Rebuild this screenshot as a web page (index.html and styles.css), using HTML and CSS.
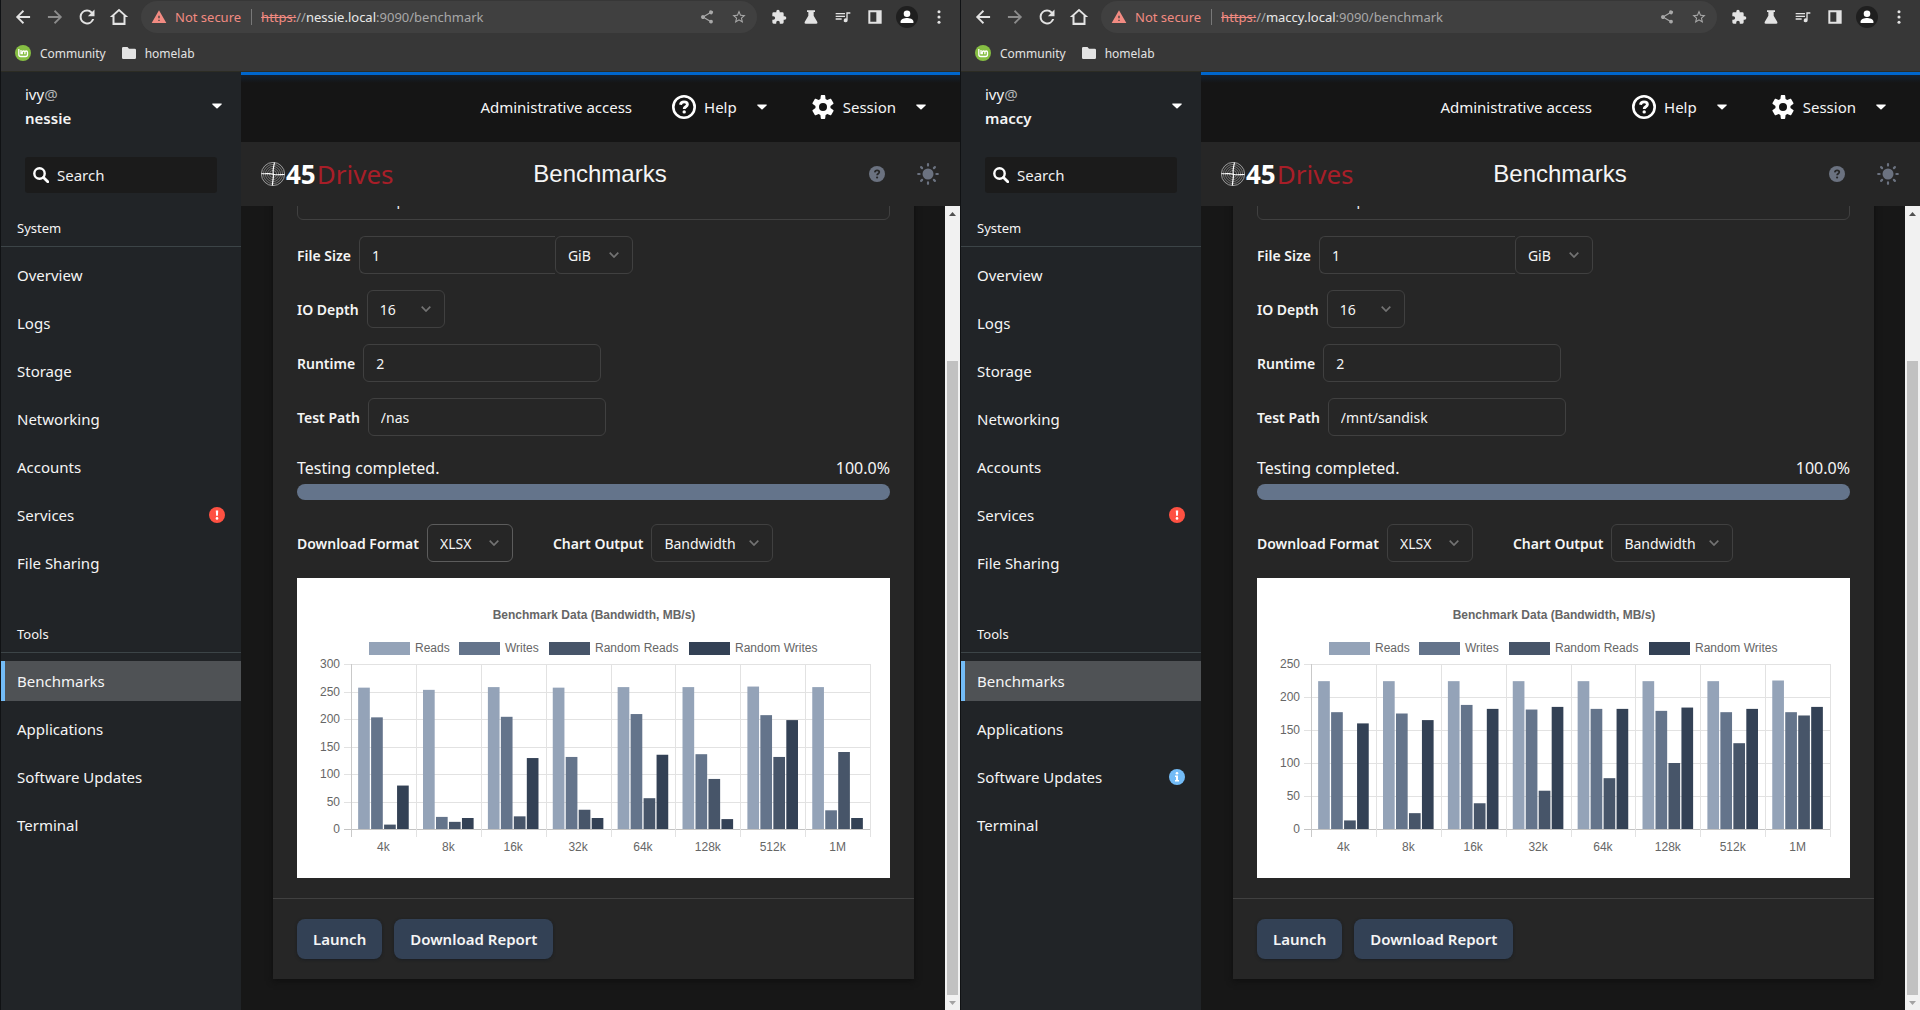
FILE: index.html
```html
<!DOCTYPE html>
<html lang="en">
<head>
<meta charset="utf-8">
<title>Benchmarks</title>
<link rel="stylesheet" href="styles.css">
</head>
<body>
<svg class="sprite" aria-hidden="true">
  <symbol id="i-back" viewBox="0 0 24 24"><path d="M20.500 10.800H7.800l5.500-5.500L11.800 3.700 3.500 12l8.300 8.300 1.500-1.600-5.500-5.500h12.700z"/></symbol>
  <symbol id="i-forward" viewBox="0 0 24 24"><path d="M3.500 10.800h12.700l-5.500-5.500 1.500-1.600 8.300 8.300-8.300 8.300-1.500-1.600 5.500-5.500H3.500z"/></symbol>
  <symbol id="i-reload" viewBox="0 0 24 24"><path d="M18.300 5.700A8.900 8.900 0 0 0 12 3.100a8.900 8.900 0 1 0 8.600 11.200h-2.500A6.500 6.500 0 1 1 12 5.500c1.800 0 3.400.7 4.600 1.900L13 11h8V3z"/></symbol>
  <symbol id="i-home" viewBox="0 0 24 24"><path d="M12 5.200L6.600 10v9h10.800v-9zM12 2L1 12h3.200v9.500h15.600V12H23z" fill-rule="evenodd"/></symbol>
  <symbol id="i-warn" viewBox="0 0 24 24"><path d="M1 21h22L12 2zm12-3h-2v-2h2zm0-4h-2v-4h2z"/></symbol>
  <symbol id="i-share" viewBox="0 0 24 24"><path d="M18 16.080c-.76 0-1.440.3-1.960.77L8.910 12.700a3.300 3.300 0 0 0 0-1.400l7.050-4.110A2.990 2.990 0 1 0 15 5c0 .24.040.47.090.7L8.040 9.810a3 3 0 1 0 0 4.380l7.120 4.160a2.900 2.900 0 1 0 2.840-2.270z"/></symbol>
  <symbol id="i-star" viewBox="0 0 24 24"><path d="M22 9.240l-7.190-.62L12 2 9.190 8.630 2 9.240l5.460 4.730L5.820 21 12 17.270 18.180 21l-1.630-7.030zM12 15.400l-3.760 2.270 1-4.280-3.320-2.880 4.380-.38L12 6.100l1.710 4.040 4.380.38-3.320 2.880 1 4.280z"/></symbol>
  <symbol id="i-puzzle" viewBox="0 0 24 24"><path d="M20.500 11H19V7a2 2 0 0 0-2-2h-4V3.500a2.500 2.500 0 0 0-5 0V5H4a2 2 0 0 0-2 2v3.800h1.500a2.700 2.700 0 0 1 0 5.400H2V20a2 2 0 0 0 2 2h3.800v-1.500a2.700 2.700 0 0 1 5.400 0V22H17a2 2 0 0 0 2-2v-4h1.500a2.500 2.500 0 0 0 0-5z"/></symbol>
  <symbol id="i-flask" viewBox="0 0 24 24"><path d="M6 2h12v2.500h-2V10l5.500 9.500A1.800 1.800 0 0 1 20 22H4a1.800 1.800 0 0 1-1.500-2.500L8 10V4.500H6z"/></symbol>
  <symbol id="i-queue" viewBox="0 0 24 24"><path d="M15 6H1v2h14zm0 4H1v2h14zM1 16h9v-2H1zM17 5v9.180a3 3 0 1 0 2 2.820V7h4V5z"/></symbol>
  <symbol id="i-panel" viewBox="0 0 24 24"><path d="M2 2h20v20H2zM5 5v14h9V5z" fill-rule="evenodd"/></symbol>
  <symbol id="i-person" viewBox="0 0 24 24"><circle cx="12" cy="12" r="12" fill="#1f1f1f"/><circle cx="12" cy="8.500" r="3.600"/><path d="M5 18.500v-1.500c0-2.600 4.500-3.800 7-3.800s7 1.200 7 3.800v1.500z"/></symbol>
  <symbol id="i-dots" viewBox="0 0 24 24"><circle cx="12" cy="4" r="2.300"/><circle cx="12" cy="12" r="2.300"/><circle cx="12" cy="20" r="2.300"/></symbol>
  <symbol id="i-mint" viewBox="0 0 16 16"><circle cx="8" cy="8" r="8" fill="#86be43"/><path d="M3.800 4v5.500a2 2 0 0 0 2 2h4.700a2 2 0 0 0 2-2V7.300a1.300 1.300 0 0 0-2.600 0v2M9.900 7.300a1.300 1.300 0 0 0-2.600 0v2M6 5v4.300" fill="none" stroke="#fff" stroke-width="1.300"/></symbol>
  <symbol id="i-folder" viewBox="0 0 14 12"><path d="M1.300 0H5.500L7 1.700h5.700A1.300 1.300 0 0 1 14 3v7.700a1.300 1.300 0 0 1-1.300 1.300H1.300A1.300 1.300 0 0 1 0 10.700V1.300A1.300 1.300 0 0 1 1.300 0z"/></symbol>
  <symbol id="i-caret" viewBox="0 0 10 6"><path d="M.8.500h8.400a.5.500 0 0 1 .4.900L5.600 5.200a.9.900 0 0 1-1.200 0L.4 1.400A.5.500 0 0 1 .8.500z"/></symbol>
  <symbol id="i-search" viewBox="0 0 16 16"><circle cx="6.500" cy="6.500" r="5.200" fill="none" stroke="#fff" stroke-width="2.400"/><path d="M10.500 10.500l4.300 4.300" stroke="#fff" stroke-width="2.800" stroke-linecap="round"/></symbol>
  <symbol id="i-help" viewBox="0 0 24 24"><circle cx="12" cy="12" r="10.700" fill="none" stroke="#fff" stroke-width="2.600"/><path d="M8.500 9.800c.3-2 1.700-2.900 3.500-2.900 2 0 3.400 1.100 3.400 2.600 0 2.400-3.200 2.200-3.200 4.500" fill="none" stroke="#fff" stroke-width="2.900"/><circle cx="12.200" cy="16.900" r="1.700"/></symbol>
  <symbol id="i-gear" viewBox="0 0 24 24"><path d="M19.430 12.980c.04-.32.070-.64.070-.98s-.03-.66-.07-.98l2.800-2.100c.3-.2.400-.6.200-.9l-2.300-4c-.2-.3-.6-.4-.9-.3l-3 1.300c-.5-.4-1.100-.7-1.700-1L14.200.700a.7.700 0 0 0-.7-.6h-3a.7.700 0 0 0-.7.600l-.4 3.320c-.6.300-1.200.6-1.700 1l-3-1.300c-.3-.1-.7 0-.9.300l-2.300 4c-.2.300-.1.700.2.900l2.800 2.100a8 8 0 0 0 0 1.960l-2.800 2.100c-.3.200-.4.600-.2.900l2.300 4c.2.300.6.400.9.300l3-1.300c.5.400 1.100.7 1.700 1l.4 3.320c0 .3.300.6.700.6h3c.4 0 .7-.3.700-.6l.4-3.320c.6-.3 1.200-.6 1.700-1l3 1.300c.3.100.7 0 .9-.3l2.300-4c.2-.3.100-.7-.2-.9zM12 16a4 4 0 1 1 0-8 4 4 0 0 1 0 8z"/></symbol>
  <symbol id="i-logo" viewBox="0 0 24 24"><g fill="none" stroke="#bdbdbd" stroke-width=".5"><circle cx="12" cy="12" r="11.600" stroke-width=".8"/><circle cx="12" cy="12" r="9.600"/><circle cx="12" cy="12" r="7.600"/><circle cx="12" cy="12" r="5.600"/><circle cx="12" cy="12" r="3.600"/></g><path d="M13.500.500C12.800 4 11.500 8 12.300 12c.5 4-1 8-.8 11.500M.5 11.500c4 .8 7.500-.6 11.500.7 4 1.200 8 .2 11.500.3" fill="none" stroke="#fff" stroke-width="1.200"/></symbol>
  <symbol id="i-qmark" viewBox="0 0 16 16"><circle cx="8" cy="8" r="8"/><path d="M5.800 6.300c.2-1.400 1.100-2 2.300-2 1.300 0 2.200.8 2.200 1.800 0 1.700-2.200 1.700-2.200 3.200" fill="none" stroke="#262626" stroke-width="1.700"/><circle cx="8.100" cy="11.500" r="1.100" fill="#262626"/></symbol>
  <symbol id="i-sun" viewBox="0 0 22 22"><circle cx="11" cy="11" r="5.500"/><g stroke="#6b7280" stroke-width="2.200" stroke-linecap="round"><path d="M11 1.200v1.400M11 19.400v1.400M1.200 11h1.400M19.400 11h1.400M4.100 4.100l1 1M16.900 16.900l1 1M4.100 17.900l1-1M16.900 5.100l1-1"/></g></symbol>
  <symbol id="i-error" viewBox="0 0 16 16"><circle cx="8" cy="8" r="8" fill="#fe5142"/><path d="M6.800 3.500h2.400l-.3 5.300H7.100z"/><circle cx="8" cy="11.400" r="1.300"/></symbol>
  <symbol id="i-info" viewBox="0 0 16 16"><circle cx="8" cy="8" r="8" fill="#73bcf7"/><path d="M6 6.500h3V11h1v1.500H6V11h1V8H6z"/><circle cx="8" cy="4.300" r="1.300"/></symbol>
  <symbol id="i-chevron" viewBox="0 0 10 6"><path d="M.7.700L5 5 9.300.700" fill="none" stroke="#737373" stroke-width="1.700"/></symbol>
</svg>

<div class="desktop">

<section class="window" aria-label="nessie">
  <header class="chrome">
    <div class="toolbar">
      <button class="tool" aria-label="Back"><svg><use href="#i-back"/></svg></button>
      <button class="tool tool-off" aria-label="Forward"><svg><use href="#i-forward"/></svg></button>
      <button class="tool" aria-label="Reload"><svg><use href="#i-reload"/></svg></button>
      <button class="tool" aria-label="Home"><svg><use href="#i-home"/></svg></button>
      <div class="omnibox">
        <svg class="warn"><use href="#i-warn"/></svg>
        <span class="not-secure">Not secure</span>
        <span class="url"><s>https:</s>//<b>nessie.local</b>:9090/benchmark</span>
        <button class="tool tool-dim" aria-label="Share"><svg><use href="#i-share"/></svg></button>
        <button class="tool tool-dim" aria-label="Bookmark"><svg><use href="#i-star"/></svg></button>
      </div>
      <button class="tool tool-small" aria-label="Extensions"><svg><use href="#i-puzzle"/></svg></button>
      <button class="tool tool-small" aria-label="Labs"><svg><use href="#i-flask"/></svg></button>
      <button class="tool tool-small" aria-label="Media"><svg><use href="#i-queue"/></svg></button>
      <button class="tool tool-small" aria-label="Side panel"><svg><use href="#i-panel"/></svg></button>
      <button class="tool tool-profile" aria-label="Profile"><svg><use href="#i-person"/></svg></button>
      <button class="tool tool-small" aria-label="Menu"><svg><use href="#i-dots"/></svg></button>
    </div>
    <nav class="bookmarks">
      <a href="#"><svg class="mint"><use href="#i-mint"/></svg>Community</a>
      <a href="#"><svg class="folder"><use href="#i-folder"/></svg>homelab</a>
    </nav>
  </header>
  <div class="shell">
    <aside class="sidebar">
      <button class="host"><span class="host-name">ivy<i>@</i><b>nessie</b></span><svg class="caret"><use href="#i-caret"/></svg></button>
      <label class="search"><svg><use href="#i-search"/></svg><input type="search" placeholder="Search" aria-label="Search"></label>
      <nav class="nav">
        <h2>System</h2>
        <a href="#">Overview</a>
        <a href="#">Logs</a>
        <a href="#">Storage</a>
        <a href="#">Networking</a>
        <a href="#">Accounts</a>
        <a href="#">Services<svg><use href="#i-error"/></svg></a>
        <a href="#">File Sharing</a>
      </nav>
      <nav class="nav">
        <h2>Tools</h2>
        <a href="#" class="current" aria-current="page">Benchmarks</a>
        <a href="#">Applications</a>
        <a href="#">Software Updates</a>
        <a href="#">Terminal</a>
      </nav>
    </aside>
    <main class="main">
      <div class="topbar">
        <button>Administrative access</button>
        <button><svg class="topicon"><use href="#i-help"/></svg>Help<svg class="caret"><use href="#i-caret"/></svg></button>
        <button class="session"><svg class="topicon"><use href="#i-gear"/></svg>Session<svg class="caret"><use href="#i-caret"/></svg></button>
      </div>
      <div class="appbar">
        <div class="logo"><svg><use href="#i-logo"/></svg><b>45</b><span>Drives</span></div>
        <h1>Benchmarks</h1>
        <div class="appbar-tools">
          <button aria-label="Help"><svg class="qmark"><use href="#i-qmark"/></svg></button>
          <button aria-label="Theme"><svg class="sun"><use href="#i-sun"/></svg></button>
        </div>
      </div>
      <div class="viewport">
        <div class="page">
          <form class="card">
            <div class="card-body">
              <div class="field"><span class="select select-full"><select aria-label="Test"><option>Benchmark Spectrum</option></select></span></div>
              <div class="field"><label for="size-a">File Size</label><span class="joined"><input id="size-a" class="text-short" value="1"><span class="select"><select aria-label="Unit"><option>GiB</option></select><svg><use href="#i-chevron"/></svg></span></span></div>
              <div class="field"><label for="depth-a">IO Depth</label><span class="select"><select id="depth-a"><option>16</option></select><svg><use href="#i-chevron"/></svg></span></div>
              <div class="field"><label for="run-a">Runtime</label><input id="run-a" value="2"></div>
              <div class="field"><label for="path-a">Test Path</label><input id="path-a" value="/nas"></div>
              <div class="status"><span>Testing completed.</span><span>100.0%</span><div class="progress"></div></div>
              <div class="field outputs">
                <div class="field"><label for="fmt-a">Download Format</label><span class="select select-format select-focus"><select id="fmt-a"><option>XLSX</option></select><svg><use href="#i-chevron"/></svg></span></div>
                <div class="field"><label for="out-a">Chart Output</label><span class="select select-output"><select id="out-a"><option>Bandwidth</option></select><svg><use href="#i-chevron"/></svg></span></div>
              </div>
              <svg class="chart" viewBox="0 0 593 300" role="img" aria-label="Benchmark data for nessie" data-max="300" data-reads="257,253,258,257,258,258,259,258" data-writes="203,22,204,131,209,136,207,34" data-random-reads="8,13,23,35,56,91,131,140" data-random-writes="79,20,129,20,135,18,198,20"></svg>
            </div>
            <div class="card-foot"><button type="button">Launch</button><button type="button">Download Report</button></div>
          </form>
        </div>
        <div class="scrollbar" aria-hidden="true"><svg class="arrow-up" viewBox="0 0 7 4"><path d="M0 4L3.500 0 7 4z"/></svg><div class="thumb"></div><svg class="arrow-down" viewBox="0 0 7 4"><path d="M0 0l3.500 4L7 0z"/></svg></div>
      </div>
    </main>
  </div>
</section>

<section class="window" aria-label="maccy">
  <header class="chrome">
    <div class="toolbar">
      <button class="tool" aria-label="Back"><svg><use href="#i-back"/></svg></button>
      <button class="tool tool-off" aria-label="Forward"><svg><use href="#i-forward"/></svg></button>
      <button class="tool" aria-label="Reload"><svg><use href="#i-reload"/></svg></button>
      <button class="tool" aria-label="Home"><svg><use href="#i-home"/></svg></button>
      <div class="omnibox">
        <svg class="warn"><use href="#i-warn"/></svg>
        <span class="not-secure">Not secure</span>
        <span class="url"><s>https:</s>//<b>maccy.local</b>:9090/benchmark</span>
        <button class="tool tool-dim" aria-label="Share"><svg><use href="#i-share"/></svg></button>
        <button class="tool tool-dim" aria-label="Bookmark"><svg><use href="#i-star"/></svg></button>
      </div>
      <button class="tool tool-small" aria-label="Extensions"><svg><use href="#i-puzzle"/></svg></button>
      <button class="tool tool-small" aria-label="Labs"><svg><use href="#i-flask"/></svg></button>
      <button class="tool tool-small" aria-label="Media"><svg><use href="#i-queue"/></svg></button>
      <button class="tool tool-small" aria-label="Side panel"><svg><use href="#i-panel"/></svg></button>
      <button class="tool tool-profile" aria-label="Profile"><svg><use href="#i-person"/></svg></button>
      <button class="tool tool-small" aria-label="Menu"><svg><use href="#i-dots"/></svg></button>
    </div>
    <nav class="bookmarks">
      <a href="#"><svg class="mint"><use href="#i-mint"/></svg>Community</a>
      <a href="#"><svg class="folder"><use href="#i-folder"/></svg>homelab</a>
    </nav>
  </header>
  <div class="shell">
    <aside class="sidebar">
      <button class="host"><span class="host-name">ivy<i>@</i><b>maccy</b></span><svg class="caret"><use href="#i-caret"/></svg></button>
      <label class="search"><svg><use href="#i-search"/></svg><input type="search" placeholder="Search" aria-label="Search"></label>
      <nav class="nav">
        <h2>System</h2>
        <a href="#">Overview</a>
        <a href="#">Logs</a>
        <a href="#">Storage</a>
        <a href="#">Networking</a>
        <a href="#">Accounts</a>
        <a href="#">Services<svg><use href="#i-error"/></svg></a>
        <a href="#">File Sharing</a>
      </nav>
      <nav class="nav">
        <h2>Tools</h2>
        <a href="#" class="current" aria-current="page">Benchmarks</a>
        <a href="#">Applications</a>
        <a href="#">Software Updates<svg><use href="#i-info"/></svg></a>
        <a href="#">Terminal</a>
      </nav>
    </aside>
    <main class="main">
      <div class="topbar">
        <button>Administrative access</button>
        <button><svg class="topicon"><use href="#i-help"/></svg>Help<svg class="caret"><use href="#i-caret"/></svg></button>
        <button class="session"><svg class="topicon"><use href="#i-gear"/></svg>Session<svg class="caret"><use href="#i-caret"/></svg></button>
      </div>
      <div class="appbar">
        <div class="logo"><svg><use href="#i-logo"/></svg><b>45</b><span>Drives</span></div>
        <h1>Benchmarks</h1>
        <div class="appbar-tools">
          <button aria-label="Help"><svg class="qmark"><use href="#i-qmark"/></svg></button>
          <button aria-label="Theme"><svg class="sun"><use href="#i-sun"/></svg></button>
        </div>
      </div>
      <div class="viewport">
        <div class="page">
          <form class="card">
            <div class="card-body">
              <div class="field"><span class="select select-full"><select aria-label="Test"><option>Benchmark Spectrum</option></select></span></div>
              <div class="field"><label for="size-b">File Size</label><span class="joined"><input id="size-b" class="text-short" value="1"><span class="select"><select aria-label="Unit"><option>GiB</option></select><svg><use href="#i-chevron"/></svg></span></span></div>
              <div class="field"><label for="depth-b">IO Depth</label><span class="select"><select id="depth-b"><option>16</option></select><svg><use href="#i-chevron"/></svg></span></div>
              <div class="field"><label for="run-b">Runtime</label><input id="run-b" value="2"></div>
              <div class="field"><label for="path-b">Test Path</label><input id="path-b" value="/mnt/sandisk"></div>
              <div class="status"><span>Testing completed.</span><span>100.0%</span><div class="progress"></div></div>
              <div class="field outputs">
                <div class="field"><label for="fmt-b">Download Format</label><span class="select select-format"><select id="fmt-b"><option>XLSX</option></select><svg><use href="#i-chevron"/></svg></span></div>
                <div class="field"><label for="out-b">Chart Output</label><span class="select select-output"><select id="out-b"><option>Bandwidth</option></select><svg><use href="#i-chevron"/></svg></span></div>
              </div>
              <svg class="chart" viewBox="0 0 593 300" role="img" aria-label="Benchmark data for maccy" data-max="250" data-reads="224,224,224,224,224,224,224,225" data-writes="177,175,188,181,182,179,177,177" data-random-reads="13,24,39,58,77,100,130,172" data-random-writes="160,165,182,185,182,184,182,185"></svg>
            </div>
            <div class="card-foot"><button type="button">Launch</button><button type="button">Download Report</button></div>
          </form>
        </div>
        <div class="scrollbar" aria-hidden="true"><svg class="arrow-up" viewBox="0 0 7 4"><path d="M0 4L3.500 0 7 4z"/></svg><div class="thumb"></div><svg class="arrow-down" viewBox="0 0 7 4"><path d="M0 0l3.500 4L7 0z"/></svg></div>
      </div>
    </main>
  </div>
</section>

</div>
<script src="charts.js"></script>
</body>
</html>
```

FILE: styles.css
```css
* { box-sizing: border-box; }

body {
  margin: 0;
  background: #171717;
  color: #f5f5f5;
  font-family: "Noto Sans", sans-serif;
}

button, input, select { font: inherit; color: inherit; }
button { border: 0; background: none; padding: 0; cursor: pointer; }
a { color: inherit; text-decoration: none; }
svg { fill: #fff; flex: none; display: block; }
.sprite { display: none; }

.desktop {
  display: grid;
  grid-template-columns: 1fr 1fr;
  height: 100vh;
}
.window {
  display: flex;
  flex-direction: column;
  min-width: 0;
  min-height: 0;
  border-left: 1px solid #101214;
}

/* Browser chrome */
.chrome {
  background: #373737;
  border-bottom: 1px solid #2c2c24;
  padding: 1px 5px 0 6px;
}
.toolbar { display: flex; align-items: center; height: 32px; }
.tool {
  width: 32px;
  height: 32px;
  display: grid;
  place-items: center;
}
.tool svg { width: 20px; height: 20px; fill: #e3e3e3; }
.tool-off svg { fill: #8c8c8c; }
.tool-small svg { width: 16px; height: 16px; }
.tool-dim svg { width: 16px; height: 16px; fill: #a8a8a8; }
.tool-profile svg { width: 22px; height: 22px; fill: #fff; }
.omnibox {
  flex: 1;
  display: flex;
  align-items: center;
  height: 32px;
  margin: 0 6px;
  padding: 0 2px 0 10px;
  border-radius: 16px;
  background: #404040;
  font-size: 13px;
  white-space: nowrap;
}
.warn { width: 16px; height: 16px; fill: #f28b82; margin-right: 8px; }
.not-secure {
  color: #f28b82;
  line-height: 16px;
  padding-right: 10px;
  border-right: 1px solid #787878;
  margin-right: 9px;
}
.url { flex: 1; color: #a8a8a8; }
.url s { color: #f28b82; }
.url b { font-weight: 400; color: #e8e8e8; }
.bookmarks {
  display: flex;
  align-items: center;
  gap: 16px;
  height: 38px;
  padding: 2px 0 0 8px;
  font-size: 12px;
  color: #e3e3e3;
}
.bookmarks a { display: flex; align-items: center; gap: 9px; }
.mint { width: 16px; height: 16px; }
.folder { width: 14px; height: 12px; fill: #e3e3e3; }

/* Sidebar */
.shell {
  flex: 1;
  display: grid;
  grid-template-columns: 240px 1fr;
  min-height: 0;
}
.sidebar { background: #212427; font-size: 15px; }
.caret { width: 10px; height: 6px; }
.host {
  display: flex;
  align-items: center;
  justify-content: space-between;
  width: 100%;
  padding: 10px 19px 0 24px;
  text-align: left;
  line-height: 24px;
}
.host i { font-style: normal; color: #b0b3b5; }
.host b { display: block; font-weight: 600; }
.search {
  display: flex;
  align-items: center;
  gap: 8px;
  height: 36px;
  margin: 27px 24px 0;
  padding: 0 8px;
  border-radius: 3px;
  background: #1b1b1b;
}
.search svg { width: 16px; height: 16px; }
.search input {
  width: 100%;
  min-width: 0;
  border: 0;
  padding: 0;
  background: none;
  outline: 0;
}
.search input::placeholder { color: #f0f0f0; opacity: 1; }
.nav {
  display: flex;
  flex-direction: column;
  gap: 8px;
  padding-top: 13px;
}
.nav + .nav { padding-top: 29px; }
.nav h2 {
  margin: 0;
  padding: 12px 16px 8px;
  border-bottom: 1px solid #3c4447;
  font-size: 13px;
  font-weight: 400;
  line-height: 20px;
}
.nav a {
  display: flex;
  align-items: center;
  justify-content: space-between;
  height: 40px;
  padding: 0 16px;
}
.nav a svg { width: 16px; height: 16px; }
.nav .current { background: #4f5255; box-shadow: inset 4px 0 #73bcf7; }

/* Main column */
.main { display: flex; flex-direction: column; min-width: 0; min-height: 0; }
.topbar {
  display: flex;
  align-items: center;
  justify-content: flex-end;
  gap: 40px;
  height: 70px;
  padding: 0 34px 3px 0;
  border-top: 3px solid #0066cc;
  background: linear-gradient(#14202e, #151515 8px);
  font-size: 15px;
}
.topbar button { display: flex; align-items: center; gap: 8px; }
.topbar .caret { margin-left: 12px; }
.topbar .session { margin-left: 4px; }
.topicon { width: 24px; height: 24px; }
.appbar {
  display: grid;
  grid-template-columns: 1fr auto 1fr;
  align-items: center;
  height: 64px;
  padding: 0 21px 0 20px;
  background: #262626;
}
.logo {
  display: flex;
  align-items: center;
  gap: 1px;
  font: 400 26px/32px "Noto Sans", sans-serif;
  color: #a81e28;
}
.logo svg { width: 24px; height: 24px; }
.logo b { color: #fff; font-weight: 700; }
.appbar h1 { margin: 0; font: 400 24px/32px "Liberation Sans", sans-serif; }
.appbar-tools { display: flex; justify-content: flex-end; align-items: center; gap: 32px; }
.appbar-tools svg { fill: #6b7280; }
.qmark { width: 16px; height: 16px; }
.sun { width: 22px; height: 22px; }

.viewport { flex: 1; display: flex; min-height: 0; overflow: hidden; }
.page {
  flex: 1;
  display: flex;
  flex-direction: column;
  justify-content: flex-end;
  min-width: 0;
  padding: 0 31px 31px 32px;
  background: #171717;
}
.scrollbar {
  width: 15px;
  display: flex;
  flex-direction: column;
  align-items: center;
  background: #f1f1f1;
}
.scrollbar svg { width: 7px; height: 4px; margin: 6px 0 5px; fill: #505050; }
.scrollbar .arrow-down { fill: #a3a3a3; }
.thumb { width: 11px; flex: 1; margin-top: 140px; background: #c1c1c1; }

/* Card */
.card { background: #262626; box-shadow: 0 2px 6px #0f0f0f; }
.card-body {
  display: flex;
  flex-direction: column;
  gap: 16px;
  padding: 24px 24px 20px;
}
.field { display: flex; align-items: center; gap: 8px; font-size: 14px; }
.field label { font-weight: 600; font-size: 14px; }
.field input, .select select {
  height: 38px;
  padding: 0 12px;
  border: 1px solid #404040;
  border-radius: 6px;
  background: #262626;
  outline: 0;
}
.field input { width: 238px; }
.field .text-short { width: 196px; border-radius: 6px 0 0 6px; border-right: 0; }
.joined { display: flex; }
.select { display: inline-grid; align-items: center; width: 78px; }
.select select { grid-area: 1 / 1; width: 100%; appearance: none; }
.select svg {
  grid-area: 1 / 1;
  justify-self: end;
  width: 10px;
  height: 6px;
  margin-right: 14px;
  pointer-events: none;
}
.select-full { width: 100%; }
.select-full select { padding-bottom: 4px; }
.select-format { width: 86px; }
.select-output { width: 122px; }
.select-focus select { border-color: #5c5c5c; }
.status {
  display: grid;
  grid-template-columns: 1fr auto;
  row-gap: 4px;
  margin: 4px 0 8px;
  font-size: 16px;
  line-height: 24px;
}
.progress {
  grid-column: 1 / -1;
  height: 16px;
  border-radius: 8px;
  background: #64748b;
}
.outputs { gap: 40px; }
.chart { width: 100%; background: #fff; }
.chart text { font: 12px "Liberation Sans", sans-serif; fill: #666; }
.chart .title { font-weight: 700; }
.card-foot {
  display: flex;
  gap: 12px;
  padding: 20px 24px;
  border-top: 1px solid #404040;
}
.card-foot button {
  height: 40px;
  padding: 0 16px;
  border-radius: 8px;
  background: #334155;
  box-shadow: 0 1px 3px #1a1d22;
  font-weight: 600;
  font-size: 15px;
}
```

FILE: charts.js
```js
const NS = "http://www.w3.org/2000/svg";
const SERIES = [
  { key: "reads", label: "Reads", color: "#94a3b8", legendX: 72 },
  { key: "writes", label: "Writes", color: "#64748b", legendX: 162 },
  { key: "randomReads", label: "Random Reads", color: "#475569", legendX: 252 },
  { key: "randomWrites", label: "Random Writes", color: "#334155", legendX: 392 },
];
const SIZES = ["4k", "8k", "16k", "32k", "64k", "128k", "512k", "1M"];
const PLOT = { left: 54, right: 573, top: 86, bottom: 251 };

function add(svg, name, attrs, text) {
  const el = document.createElementNS(NS, name);
  for (const [k, v] of Object.entries(attrs)) el.setAttribute(k, v);
  if (text) el.textContent = text;
  svg.appendChild(el);
}

function line(svg, x1, y1, x2, y2, stroke) {
  add(svg, "line", { x1, y1, x2, y2, stroke, "shape-rendering": "crispEdges" });
}

document.querySelectorAll(".chart").forEach((svg) => {
  const max = Number(svg.dataset.max);
  const height = PLOT.bottom - PLOT.top;
  const slot = (PLOT.right - PLOT.left) / SIZES.length;

  add(svg, "text", { x: 297, y: 41, "text-anchor": "middle", class: "title" }, "Benchmark Data (Bandwidth, MB/s)");
  SERIES.forEach((s) => {
    add(svg, "rect", { x: s.legendX, y: 64, width: 41, height: 13, fill: s.color });
    add(svg, "text", { x: s.legendX + 46, y: 74 }, s.label);
  });

  for (let v = 0; v <= max; v += 50) {
    const y = Math.round(PLOT.bottom - (v / max) * height);
    line(svg, PLOT.left - 7, y + 0.5, PLOT.right, y + 0.5, v ? "#e2e2e2" : "#c4c4c4");
    add(svg, "text", { x: 43, y: y + 4, "text-anchor": "end" }, String(v));
  }
  SIZES.forEach((size, i) => {
    const x = PLOT.left + i * slot;
    line(svg, Math.round(x) + 0.5, PLOT.top, Math.round(x) + 0.5, PLOT.bottom + 8, i ? "#e2e2e2" : "#c9c9c9");
    add(svg, "text", { x: x + slot / 2, y: 273, "text-anchor": "middle" }, size);
    SERIES.forEach((s, j) => {
      const h = (Number(svg.dataset[s.key].split(",")[i]) / max) * height;
      const step = (slot * 0.8) / 4;
      add(svg, "rect", { x: x + slot * 0.1 + step * (j + 0.05), y: PLOT.bottom - h, width: step * 0.9, height: h, fill: s.color });
    });
  });
  line(svg, PLOT.right + 0.5, PLOT.top, PLOT.right + 0.5, PLOT.bottom + 8, "#e2e2e2");
});
```
